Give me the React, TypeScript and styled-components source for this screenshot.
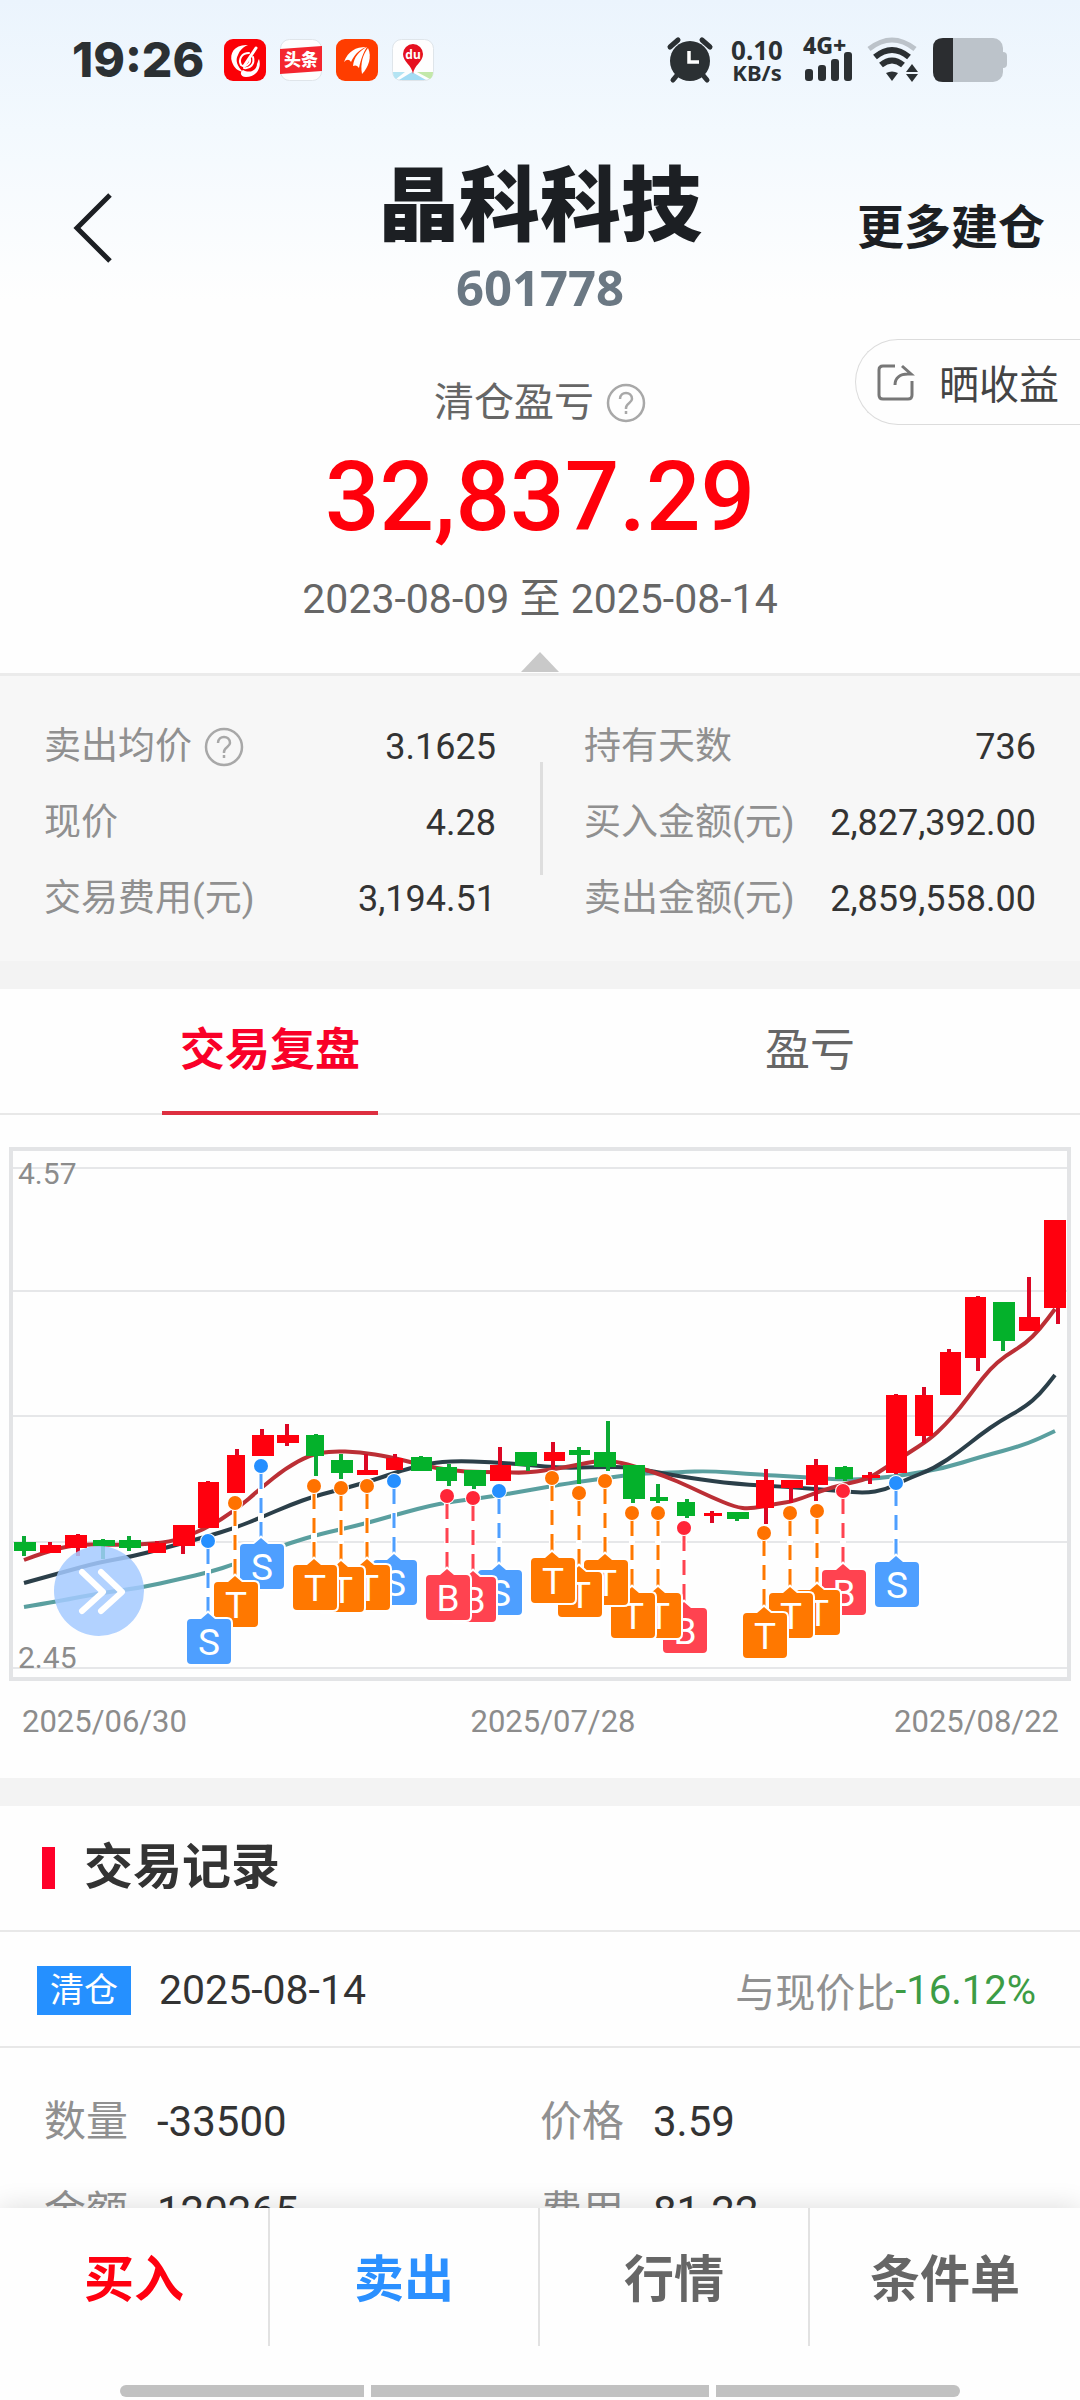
import React, { useState } from "react";
import styled, { createGlobalStyle } from "styled-components";

const GlobalStyle = createGlobalStyle`
  * { box-sizing: border-box; }
  body {
    margin: 0;
    background: #fefefe;
    color: #333;
    font-family: Roboto, "Noto Sans CJK SC", sans-serif;
  }
  button {
    margin: 0;
    padding: 0;
    border: 0;
    background: none;
    color: inherit;
    font: inherit;
    cursor: pointer;
  }
  dl, dt, dd, h1, h2, p { margin: 0; font-weight: 400; }
  svg { display: block; overflow: visible; }
`;

const Screen = styled.div`
  display: flex;
  flex-direction: column;
  height: 100vh;
  overflow: hidden;
  background: #fefefe;
`;

const Scroll = styled.main`
  flex: 1;
  min-height: 0;
  overflow: hidden;
  background: linear-gradient(#ebf4fd 0, #f3f9fe 130px, #fefefe 300px);
`;

/* ---------- status bar ---------- */

const StatusBar = styled.div`
  display: flex;
  align-items: center;
  justify-content: space-between;
  height: 120px;
  padding: 0 72px;
  color: #2b3033;
`;

const StatusGroup = styled.div`
  display: flex;
  align-items: center;
  gap: 14px;
`;

const Clock = styled.span`
  width: 138px;
  font: 800 48px/60px Inter, sans-serif;
`;

const NetSpeed = styled.span`
  display: flex;
  flex-direction: column;
  align-items: center;
  width: 58px;
  font: 700 26px/24px "Noto Sans", sans-serif;
  small {
    font-size: 22px;
    line-height: 20px;
  }
`;

/* ---------- header ---------- */

const Header = styled.header`
  display: grid;
  grid-template-columns: 1fr auto 1fr;
  align-items: center;
  padding-top: 14px;
`;

const BackButton = styled.button`
  justify-self: start;
  padding: 0 73px;
`;

const Titles = styled.div`
  padding: 17px 0 4px;
  text-align: center;
`;

const StockName = styled.h1`
  margin-bottom: 10px;
  font: 900 81px/96px "Noto Sans CJK SC", sans-serif;
  color: #1c1f23;
`;

const StockCode = styled.p`
  font: 700 49px/60px "Noto Sans", sans-serif;
  color: #6b7883;
`;

const MoreButton = styled.button`
  justify-self: end;
  margin-right: 35px;
  font-size: 47px;
  font-weight: 700;
  line-height: 60px;
  color: #1c1f23;
`;

/* ---------- profit summary ---------- */

const Summary = styled.section`
  position: relative;
  display: flex;
  flex-direction: column;
  align-items: center;
  padding: 55px 0 1px;
`;

const ShareButton = styled.button`
  position: absolute;
  top: 18px;
  right: 0;
  display: flex;
  align-items: center;
  gap: 26px;
  height: 86px;
  padding: 0 21px;
  border: 1px solid #dcdcdc;
  border-right: 0;
  border-radius: 43px 0 0 43px;
  background: #fefefe;
  font-size: 40px;
  color: #444;
`;

const SummaryLabel = styled.div`
  display: flex;
  align-items: center;
  gap: 12px;
  font-size: 40px;
  line-height: 54px;
  color: #666;
`;

const HelpButton = styled.button`
  display: flex;
`;

const Amount = styled.p`
  margin-top: 12px;
  font-size: 96px;
  font-weight: 500;
  line-height: 110px;
  color: #ff000b;
`;

const Period = styled.p`
  margin-top: 20px;
  font-size: 41px;
  line-height: 54px;
  color: #666;
`;

const FoldButton = styled.button`
  margin-top: 26px;
`;

const Stats = styled.section`
  position: relative;
  display: grid;
  grid-template-columns: 1fr 1fr;
  column-gap: 88px;
  padding: 33px 44px 24px;
  border-top: 3px solid #ebebeb;
  background: #f7f7f7;
  &::after {
    content: "";
    position: absolute;
    top: 86px;
    bottom: 86px;
    left: 50%;
    width: 3px;
    background: #dedede;
  }
`;

const StatRow = styled.div`
  display: flex;
  align-items: center;
  justify-content: space-between;
  line-height: 76px;
  dt {
    display: flex;
    align-items: center;
    gap: 12px;
    font-size: 37px;
    color: #909090;
  }
  dd {
    font-size: 36px;
    color: #333;
  }
`;

const Band = styled.div`
  height: 28px;
  background: #f3f3f3;
`;

/* ---------- tabs ---------- */

const Tabs = styled.div`
  display: grid;
  grid-template-columns: 1fr 1fr;
  border-bottom: 2px solid #e8e8e8;
  background: #fefefe;
`;

const Tab = styled.button<{ $active: boolean }>`
  position: relative;
  font-size: 45px;
  font-weight: ${(p) => (p.$active ? 700 : 400)};
  line-height: 124px;
  color: ${(p) => (p.$active ? "#f90028" : "#666")};
  &::after {
    content: "";
    position: absolute;
    bottom: -2px;
    left: 50%;
    width: 216px;
    height: 4px;
    margin-left: -108px;
    background: ${(p) => (p.$active ? "#dd2f40" : "transparent")};
  }
`;

/* ---------- chart ---------- */

const ChartBox = styled.section`
  position: relative;
  background: #fefefe;
  svg { width: 100%; }
`;

const ExpandButton = styled.button`
  position: absolute;
  left: 5%;
  top: 65%;
  width: 90px;
  height: 90px;
  border-radius: 50%;
  background: rgba(164, 202, 255, 0.85);
`;

/* ---------- records ---------- */

const RecordsTitle = styled.h2`
  display: flex;
  align-items: center;
  gap: 29px;
  height: 126px;
  padding: 0 42px;
  border-bottom: 2px solid #e8e8e8;
  font-size: 49px;
  font-weight: 700;
  line-height: 60px;
  color: #333;
  &::before {
    content: "";
    width: 13px;
    height: 42px;
    background: #ff0029;
  }
`;

const RecordHead = styled.div`
  display: flex;
  align-items: center;
  height: 116px;
  padding: 2px 44px 0 37px;
  border-bottom: 2px solid #e8e8e8;
  font-size: 40px;
  color: #909090;
  time {
    flex: 1;
    margin-left: 28px;
    font-size: 41px;
    color: #333;
  }
`;

const Tag = styled.span`
  padding: 0 13px;
  background: #2590ff;
  font-size: 34px;
  line-height: 49px;
  color: #fff;
`;

const Change = styled.span`
  color: #3c9c45;
`;

const RecordGrid = styled.dl`
  display: grid;
  grid-template-columns: 1fr 1fr;
  padding: 29px 44px;
`;

const RecordCell = styled.div`
  display: flex;
  gap: 29px;
  font-size: 42px;
  line-height: 90px;
  dt { color: #909090; }
  dd { color: #333; }
`;

/* ---------- bottom bar ---------- */

const BottomBar = styled.footer`
  position: relative;
  background: #fefefe;
  box-shadow: 0 0 26px rgba(0, 0, 0, 0.14);
`;

const Actions = styled.nav`
  display: grid;
  grid-template-columns: repeat(4, 1fr);
`;

const Action = styled.button<{ $color: string }>`
  padding-top: 6px;
  border-right: 2px solid #e2e2e2;
  font-size: 50px;
  font-weight: 700;
  line-height: 132px;
  color: ${(p) => p.$color};
  &:last-child { border-right: 0; }
`;

const Gesture = styled.div`
  display: grid;
  grid-template-columns: 244fr 338fr 244fr;
  gap: 7px;
  padding: 39px 120px 3px;
  span {
    height: 12px;
    background: #c1c1c1;
  }
  span:first-child { border-radius: 6px 0 0 6px; }
  span:last-child { border-radius: 0 6px 6px 0; }
`;

/* ---------- icons ---------- */

const INK = "#2b3033";

const BroadcastApp = () => (
  <svg width="42" height="42" viewBox="0 0 42 42">
    <rect width="42" height="42" rx="9" fill="#fb0006" />
    <path d="M24 6C11 5 5 14 8 23C10 29 14 32 19 33C13 27 11 21 14 16C16 11 19 8 24 6Z" fill="#fff" />
    <path d="M35 20C38 29 32 38 22 38C17 38 15 34 19 31C26 35 33 31 33 25C34 23 34 21 35 20Z" fill="#fff" />
    <path d="M32 9L20 27" fill="none" stroke="#fff" strokeWidth="3" strokeLinecap="round" />
    <path d="M25 14C18 14 14 20 17 26C21 29 27 25 26 20M29 18C31 25 26 30 20 29" fill="none" stroke="#fff" strokeWidth="2" strokeLinecap="round" />
  </svg>
);

const NewsApp = () => (
  <svg width="42" height="42" viewBox="0 0 42 42">
    <rect x=".5" y=".5" width="41" height="41" rx="9" fill="#fefefe" stroke="#dfe5ea" />
    <path d="M0 10L42 7V32L0 35Z" fill="#f4262f" />
    <text x="21" y="27" textAnchor="middle" fontSize="17" fontWeight="900" fill="#fff" fontFamily="Noto Sans CJK SC">头条</text>
  </svg>
);

const WingApp = () => (
  <svg width="42" height="42" viewBox="0 0 42 42">
    <rect width="42" height="42" rx="9" fill="#ff3d00" />
    <path d="M8 23C12 12 20 8 30 8C21 12 18 17 15 23C13 20 11 20 8 23Z" fill="#fff" />
    <path d="M17 27C18 18 23 12 31 8C27 14 25 20 23 29C21 26 19 26 17 27Z" fill="#fff" />
    <path d="M26 35C24 25 27 15 32 9C36 17 33 28 26 35Z" fill="#fff" />
  </svg>
);

const MapApp = () => (
  <svg width="42" height="42" viewBox="0 0 42 42">
    <rect x=".5" y=".5" width="41" height="41" rx="9" fill="#fefefe" stroke="#dfe5ea" />
    <path d="M1 33H13L4 40Q1 38 1 33Z" fill="#b4e4f3" />
    <path d="M20 33L7 41H34Z" fill="#a3dcf4" />
    <path d="M25 33H41Q41 38 38 40Z" fill="#c3e8a9" />
    <path d="M21 35C20 26 11 23 11 15A10 10 0 0 1 31 15C31 23 22 26 21 35Z" fill="#e5101f" />
    <text x="21" y="20" textAnchor="middle" fontSize="12" fontWeight="700" fill="#fff" fontFamily="Noto Sans">du</text>
  </svg>
);

const AlarmIcon = () => (
  <svg width="48" height="46" viewBox="0 0 48 46">
    <circle cx="24" cy="24" r="20" fill={INK} />
    <path d="M4 10L12 3M44 10L36 3" stroke={INK} strokeWidth="5" strokeLinecap="round" />
    <path d="M12 37L7 43M36 37L41 43" stroke={INK} strokeWidth="5" strokeLinecap="round" />
    <path d="M23 14V25H33" fill="none" stroke="#fff" strokeWidth="3.5" />
  </svg>
);

const SignalIcon = () => (
  <svg width="52" height="46" viewBox="0 0 52 46">
    <text x="3" y="17" fontSize="23" fontWeight="800" fill={INK} fontFamily="Noto Sans">4G+</text>
    <rect x="5" y="32" width="8" height="12" rx="3" fill={INK} />
    <rect x="18" y="28" width="8" height="16" rx="3" fill={INK} />
    <rect x="31" y="22" width="8" height="22" rx="3" fill={INK} />
    <rect x="44" y="15" width="8" height="29" rx="3" fill={INK} />
  </svg>
);

const WifiIcon = () => (
  <svg width="52" height="46" viewBox="0 0 52 46">
    <path d="M3 12Q26 -6 49 12" fill="none" stroke="#bcc3ca" strokeWidth="5" />
    <path d="M9 20Q26 6 43 20" fill="none" stroke={INK} strokeWidth="6" />
    <path d="M15 28Q26 19 37 28" fill="none" stroke={INK} strokeWidth="6" />
    <path d="M20 36Q26 33 32 36L26 44Z" fill={INK} />
    <path d="M46 27L52 35H40ZM46 45L52 37H40Z" fill={INK} />
  </svg>
);

const BatteryIcon = () => (
  <svg width="76" height="44" viewBox="0 0 76 44">
    <rect x="1" width="70" height="44" rx="10" fill="#bcc3ca" />
    <path d="M11 0H21V44H11Q1 44 1 34V10Q1 0 11 0Z" fill="#2b2d30" />
    <path d="M71 14Q75 14 75 18V26Q75 30 71 30Z" fill="#bcc3ca" />
  </svg>
);

const HelpIcon = () => (
  <svg width="40" height="40" viewBox="0 0 40 40" fill="none" stroke="#a8a8a8" strokeWidth="2.5">
    <circle cx="20" cy="20" r="18" />
    <path d="M14 16C14 8 26 8 26 16C26 20 20 20 20 25V26M20 28V31" />
  </svg>
);

const ShareIcon = () => (
  <svg width="36" height="36" viewBox="0 0 36 36" fill="none" stroke="#777" strokeWidth="3">
    <path d="M18 2H6Q2 2 2 6V31Q2 35 6 35H31Q35 35 35 31V17" />
    <path d="M25 2L34 10H31C23 10 18 14 18 21" />
  </svg>
);

/* ---------- chart data ---------- */

type Candle = [up: 0 | 1, x: number, top: number, bottom: number, wick: number, high: number, low: number, width: number];

const candles: Candle[] = [
  [0, 14, 1541, 1550, 23, 1535, 1555, 22], [1, 40, 1544, 1552, 49, 1541, 1552, 21],
  [1, 65, 1534, 1547, 77, 1533, 1555, 22], [0, 93, 1539, 1545, 102, 1538, 1558, 22],
  [0, 119, 1539, 1547, 128, 1535, 1550, 22], [1, 148, 1542, 1552, 156, 1540, 1552, 18],
  [1, 173, 1524, 1545, 182, 1524, 1553, 22], [1, 198, 1481, 1527, 207, 1480, 1527, 21],
  [1, 227, 1454, 1492, 236, 1448, 1492, 18], [1, 252, 1434, 1455, 261, 1428, 1455, 22],
  [1, 277, 1434, 1442, 286, 1423, 1445, 22], [0, 306, 1434, 1455, 315, 1433, 1475, 18],
  [0, 331, 1459, 1472, 340, 1453, 1478, 22], [1, 357, 1469, 1474, 365, 1453, 1474, 21],
  [1, 386, 1457, 1469, 394, 1453, 1469, 17], [0, 411, 1456, 1470, 420, 1455, 1470, 21],
  [0, 436, 1466, 1480, 448, 1463, 1485, 21], [0, 464, 1469, 1485, 473, 1469, 1488, 22],
  [1, 490, 1464, 1480, 499, 1446, 1480, 21], [0, 515, 1451, 1465, 527, 1451, 1470, 22],
  [1, 544, 1451, 1460, 552, 1441, 1468, 21], [0, 569, 1449, 1454, 578, 1446, 1483, 21],
  [0, 594, 1451, 1466, 607, 1420, 1470, 22], [0, 623, 1464, 1498, 632, 1464, 1502, 22],
  [0, 650, 1496, 1500, 657, 1483, 1502, 18], [0, 677, 1501, 1515, 686, 1498, 1517, 18],
  [1, 704, 1512, 1515, 711, 1510, 1522, 18], [0, 727, 1511, 1518, 736, 1511, 1520, 22],
  [1, 756, 1479, 1507, 765, 1468, 1523, 18], [1, 781, 1479, 1487, 790, 1479, 1502, 22],
  [1, 806, 1464, 1484, 815, 1458, 1500, 22], [0, 835, 1466, 1478, 844, 1465, 1480, 18],
  [1, 862, 1474, 1477, 869, 1471, 1483, 18], [1, 886, 1394, 1472, 895, 1393, 1473, 21],
  [1, 915, 1394, 1435, 923, 1386, 1442, 18], [1, 940, 1351, 1394, 948, 1348, 1394, 21],
  [1, 965, 1296, 1357, 977, 1295, 1370, 21], [0, 993, 1301, 1340, 1002, 1301, 1350, 22],
  [1, 1019, 1316, 1330, 1028, 1276, 1330, 21], [1, 1044, 1219, 1307, 1057, 1219, 1323, 22],
];

type Point = [number, number];

const ma5: Point[] = [
  [24, 1559], [45, 1551], [77, 1543], [115, 1544], [150, 1543], [175, 1540], [207, 1527], [236, 1509], [261, 1487],
  [286, 1467], [310, 1454], [330, 1450], [360, 1451], [390, 1456], [410, 1461], [435, 1467], [465, 1471], [500, 1471],
  [525, 1472], [548, 1469], [578, 1464], [595, 1460], [615, 1460], [640, 1467], [665, 1475], [690, 1486], [711, 1496],
  [735, 1506], [750, 1508], [775, 1503], [795, 1500], [820, 1490], [845, 1483], [868, 1478], [885, 1467], [907, 1453],
  [930, 1438], [945, 1424], [960, 1407], [975, 1387], [990, 1368], [1005, 1355], [1025, 1343], [1040, 1328], [1055, 1308],
];

const ma10: Point[] = [
  [24, 1582], [60, 1572], [100, 1561], [130, 1556], [165, 1547], [205, 1536], [235, 1527], [262, 1516], [290, 1504],
  [315, 1495], [350, 1486], [380, 1477], [400, 1470], [430, 1462], [455, 1460], [490, 1461], [530, 1464], [560, 1467],
  [600, 1466], [630, 1466], [655, 1471], [690, 1477], [735, 1483], [790, 1486], [840, 1490], [865, 1492], [885, 1489],
  [905, 1479], [935, 1467], [960, 1450], [980, 1434], [1000, 1420], [1025, 1406], [1040, 1393], [1055, 1374],
];

const ma20: Point[] = [
  [24, 1606], [60, 1600], [100, 1592], [140, 1587], [180, 1578], [210, 1571], [235, 1563], [262, 1552], [290, 1542],
  [320, 1533], [360, 1524], [395, 1514], [440, 1502], [490, 1496], [530, 1489], [570, 1482], [600, 1478], [635, 1473],
  [680, 1471], [710, 1470], [750, 1473], [800, 1476], [850, 1479], [880, 1477], [905, 1474], [945, 1467], [980, 1456],
  [1025, 1444], [1055, 1430],
];

type Kind = "S" | "T" | "B";

const trades: [Kind, x: number, dot: number, top: number][] = [
  ["S", 208, 1540, 1618], ["T", 235, 1502, 1581], ["S", 261, 1465, 1543],
  ["T", 314, 1485, 1564], ["T", 341, 1487, 1566], ["T", 367, 1485, 1564], ["S", 394, 1480, 1559],
  ["B", 447, 1495, 1574], ["B", 473, 1497, 1576], ["S", 499, 1490, 1569],
  ["T", 552, 1477, 1557], ["T", 579, 1492, 1571], ["T", 605, 1480, 1559],
  ["T", 632, 1512, 1592], ["T", 658, 1512, 1592], ["B", 684, 1527, 1607],
  ["T", 764, 1532, 1612], ["T", 790, 1512, 1592], ["T", 817, 1510, 1589],
  ["B", 843, 1490, 1569], ["S", 896, 1482, 1561],
];

const dotColor: Record<Kind, string> = { S: "#258fff", T: "#ff7200", B: "#ff2537" };
const boxColor: Record<Kind, string> = { S: "#4e9fff", T: "#ff7800", B: "#ff4350" };

const smooth = (pts: Point[]) => {
  let d = `M${pts[0][0]} ${pts[0][1]}`;
  for (let i = 1; i < pts.length - 1; i++) {
    const mx = (pts[i][0] + pts[i + 1][0]) / 2;
    const my = (pts[i][1] + pts[i + 1][1]) / 2;
    d += `Q${pts[i][0]} ${pts[i][1]} ${mx} ${my}`;
  }
  const last = pts[pts.length - 1];
  return `${d}L${last[0]} ${last[1]}`;
};

const TradeMark = ({ kind, x, dot, top }: { kind: Kind; x: number; dot: number; top: number }) => (
  <g>
    <line x1={x} x2={x} y1={dot} y2={top - 4} stroke="#fff" strokeWidth="6" />
    <line x1={x} x2={x} y1={dot} y2={top - 4} stroke={boxColor[kind]} strokeWidth="3" strokeDasharray="23 9 15 9" />
    <circle cx={x} cy={dot} r="8" fill="#fff" />
    <circle cx={x} cy={dot} r="7" fill={dotColor[kind]} />
    <path
      d={`M${x - 17} ${top}H${x - 7}L${x} ${top - 6}L${x + 7} ${top}H${x + 19}Q${x + 23} ${top} ${x + 23} ${top + 4}V${top + 41}Q${x + 23} ${top + 45} ${x + 19} ${top + 45}H${x - 17}Q${x - 21} ${top + 45} ${x - 21} ${top + 41}V${top + 4}Q${x - 21} ${top} ${x - 17} ${top}Z`}
      fill={boxColor[kind]}
      stroke="#fff"
      strokeWidth="4"
      paintOrder="stroke"
    />
    <text x={x + 1} y={top + 36} textAnchor="middle" fontSize="37" fill="#fff">{kind}</text>
  </g>
);

const Chart = () => (
  <svg viewBox="0 1114 1080 663" role="img" aria-label="交易复盘">
    <g stroke="#e6e7e9" strokeWidth="2">
      {[1167, 1290, 1415, 1541, 1667].map((y) => <line key={y} x1="12" x2="1068" y1={y} y2={y} />)}
    </g>
    <rect x="11" y="1148" width="1058" height="530" fill="none" stroke="#e3e4e6" strokeWidth="4" />
    <g fill="none" strokeWidth="4">
      <path d={smooth(ma20)} stroke="#5a9f9f" />
      <path d={smooth(ma10)} stroke="#2b3f49" />
      <path d={smooth(ma5)} stroke="#bb2f35" />
    </g>
    {candles.map(([up, x, top, bottom, wick, high, low, width]) => (
      <g key={x}>
        <rect x={wick - 1} y={high} width="4" height={low - high} fill={up ? "#dc0724" : "#0caa35"} />
        <rect x={x} y={top} width={width} height={bottom - top} fill={up ? "#ff000e" : "#04b12b"} />
      </g>
    ))}
    {[...trades].reverse().map(([kind, x, dot, top]) => <TradeMark key={x} kind={kind} x={x} dot={dot} top={top} />)}
    <g fontSize="30" fill="#8c8c8c">
      <text x="18" y="1183">4.57</text>
      <text x="18" y="1667">2.45</text>
    </g>
    <g fontSize="31" fill="#8c8c8c">
      <text x="22" y="1731">2025/06/30</text>
      <text x="553" y="1731" textAnchor="middle">2025/07/28</text>
      <text x="1059" y="1731" textAnchor="end">2025/08/22</text>
    </g>
  </svg>
);

/* ---------- page ---------- */

const leftStats = [
  { label: "卖出均价", value: "3.1625", help: true },
  { label: "现价", value: "4.28" },
  { label: "交易费用(元)", value: "3,194.51" },
];

const rightStats = [
  { label: "持有天数", value: "736" },
  { label: "买入金额(元)", value: "2,827,392.00" },
  { label: "卖出金额(元)", value: "2,859,558.00" },
];

const record = [
  ["数量", "-33500"],
  ["价格", "3.59"],
  ["金额", "120265"],
  ["费用", "81.22"],
];

const actions = [
  ["买入", "#ff0010"],
  ["卖出", "#2b90ff"],
  ["行情", "#666"],
  ["条件单", "#666"],
];

const StatList = ({ rows }: { rows: { label: string; value: string; help?: boolean }[] }) => (
  <dl>
    {rows.map((row) => (
      <StatRow key={row.label}>
        <dt>
          {row.label}
          {row.help && <HelpButton aria-label="说明"><HelpIcon /></HelpButton>}
        </dt>
        <dd>{row.value}</dd>
      </StatRow>
    ))}
  </dl>
);

export default function App() {
  const [tab, setTab] = useState("交易复盘");

  return (
    <Screen>
      <GlobalStyle />
      <Scroll>
        <StatusBar>
          <StatusGroup>
            <Clock>19:26</Clock>
            <BroadcastApp />
            <NewsApp />
            <WingApp />
            <MapApp />
          </StatusGroup>
          <StatusGroup>
            <AlarmIcon />
            <NetSpeed>0.10<small>KB/s</small></NetSpeed>
            <SignalIcon />
            <WifiIcon />
            <BatteryIcon />
          </StatusGroup>
        </StatusBar>

        <Header>
          <BackButton aria-label="返回">
            <svg width="40" height="70" viewBox="0 0 40 70">
              <path d="M37 2L4 35L37 68" fill="none" stroke="#1c1f23" strokeWidth="5" />
            </svg>
          </BackButton>
          <Titles>
            <StockName>晶科科技</StockName>
            <StockCode>601778</StockCode>
          </Titles>
          <MoreButton>更多建仓</MoreButton>
        </Header>

        <Summary>
          <ShareButton><ShareIcon />晒收益</ShareButton>
          <SummaryLabel>
            清仓盈亏
            <HelpButton aria-label="说明"><HelpIcon /></HelpButton>
          </SummaryLabel>
          <Amount>32,837.29</Amount>
          <Period>2023-08-09 至 2025-08-14</Period>
          <FoldButton aria-label="收起">
            <svg width="38" height="20" viewBox="0 0 38 20"><path d="M19 0L38 20H0Z" fill="#c9c9c9" /></svg>
          </FoldButton>
        </Summary>

        <Stats>
          <StatList rows={leftStats} />
          <StatList rows={rightStats} />
        </Stats>
        <Band />

        <Tabs role="tablist">
          {["交易复盘", "盈亏"].map((name) => (
            <Tab key={name} role="tab" aria-selected={tab === name} $active={tab === name} onClick={() => setTab(name)}>
              {name}
            </Tab>
          ))}
        </Tabs>

        <ChartBox>
          <Chart />
          <ExpandButton aria-label="展开">
            <svg viewBox="0 0 90 90" fill="none" stroke="#fff" strokeWidth="6" strokeLinecap="round" strokeLinejoin="round">
              <path d="M28 26L49 46L28 65M47 26L68 46L47 65" />
            </svg>
          </ExpandButton>
        </ChartBox>
        <Band />

        <section>
          <RecordsTitle>交易记录</RecordsTitle>
          <RecordHead>
            <Tag>清仓</Tag>
            <time>2025-08-14</time>
            与现价比<Change>-16.12%</Change>
          </RecordHead>
          <RecordGrid>
            {record.map(([label, value]) => (
              <RecordCell key={label}>
                <dt>{label}</dt>
                <dd>{value}</dd>
              </RecordCell>
            ))}
          </RecordGrid>
        </section>
      </Scroll>

      <BottomBar>
        <Actions>
          {actions.map(([name, color]) => <Action key={name} $color={color}>{name}</Action>)}
        </Actions>
        <Gesture><span /><span /><span /></Gesture>
      </BottomBar>
    </Screen>
  );
}
